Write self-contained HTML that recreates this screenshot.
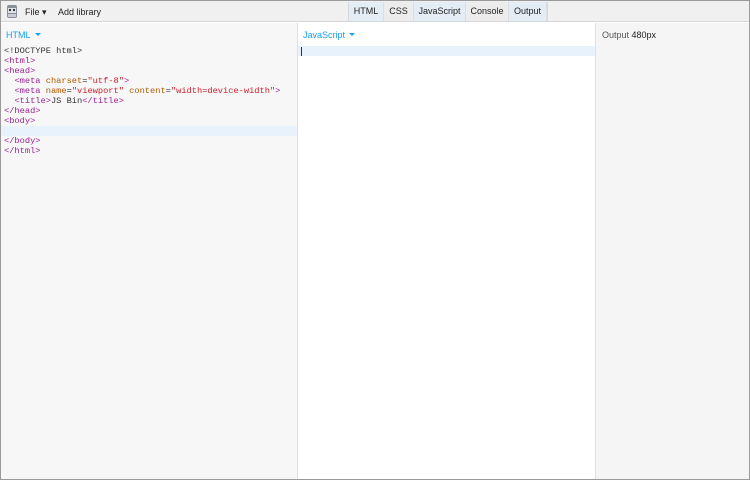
<!DOCTYPE html>
<html><head><style>
*{margin:0;padding:0;box-sizing:border-box}
body{width:750px;height:480px;overflow:hidden;font-family:"Liberation Sans",sans-serif;font-size:9px;background:#fff;position:relative}
.frame{position:absolute;inset:0;border:1px solid #9a9a9a}
.top{position:absolute;left:1px;top:1px;right:1px;height:21px;background:#f0f0f0;border-bottom:1px solid #d6d6d6}
.top span{position:absolute;top:6px;color:#222}
.btns{position:absolute;left:347px;top:1px;height:20px;display:flex;border:1px solid #d8d8d8;border-top:none}
.btns div{height:19px;line-height:19px;text-align:center;color:#222;border-right:1px solid #ddd;background:#ececec}
.btns .on{background:#e4edf6}
.pane{position:absolute;top:23px;bottom:1px}
.p1{left:1px;width:297px;background:#f7f7f7;border-right:1px solid #e0e0e0}
.p2{left:298px;width:298px;background:#fff;border-right:1px solid #e0e0e0}
.p3{left:596px;right:1px;background:#f5f5f5}
.lbl{position:absolute;left:5px;top:7px;color:#1a9ff0}
.lbl:after{content:"";display:inline-block;margin-left:4px;border:3px solid transparent;border-top:3px solid #1a9ff0;vertical-align:-1px}
pre{position:absolute;left:3px;top:23px;font-family:"Liberation Mono",monospace;font-size:8.7px;line-height:10px;color:#333}
.t{color:#9b2393}.a{color:#b05a00}.s{color:#d0202a}
.hl{position:absolute;left:0;right:0;height:10px;background:#e8f2fc}
</style></head><body>
<div class="top">
<svg style="position:absolute;left:5px;top:3px" width="12" height="15" viewBox="0 0 12 15"><rect x="1" y="1" width="10" height="13" rx="2" fill="#8a8e96"/><rect x="2" y="4" width="8" height="5" fill="#dfe3e8"/><rect x="3" y="5" width="2" height="2" fill="#333"/><rect x="7" y="5" width="2" height="2" fill="#333"/><rect x="2" y="10" width="8" height="3" fill="#c8ccd2"/></svg>
<span style="left:24px">File ▾</span>
<span style="left:57px">Add library</span>
<div class="btns"><div class="on" style="width:35px">HTML</div><div style="width:30px">CSS</div><div class="on" style="width:52px">JavaScript</div><div style="width:43px">Console</div><div class="on" style="width:38px">Output</div></div>
</div>
<div class="pane p1">
<div class="lbl">HTML</div>
<div class="hl" style="top:103px"></div>
<pre>&lt;!DOCTYPE html&gt;
<span class="t">&lt;html&gt;</span>
<span class="t">&lt;head&gt;</span>
  <span class="t">&lt;meta</span> <span class="a">charset</span>=<span class="s">"utf-8"</span><span class="t">&gt;</span>
  <span class="t">&lt;meta</span> <span class="a">name</span>=<span class="s">"viewport"</span> <span class="a">content</span>=<span class="s">"width=device-width"</span><span class="t">&gt;</span>
  <span class="t">&lt;title&gt;</span>JS Bin<span class="t">&lt;/title&gt;</span>
<span class="t">&lt;/head&gt;</span>
<span class="t">&lt;body&gt;</span>

<span class="t">&lt;/body&gt;</span>
<span class="t">&lt;/html&gt;</span></pre>
</div>
<div class="pane p2">
<div class="lbl">JavaScript</div>
<div class="hl" style="top:23px"></div>
<div style="position:absolute;left:3px;top:24px;width:1px;height:9px;background:#333"></div>
</div>
<div class="pane p3">
<div style="position:absolute;left:6px;top:7px;color:#222"><span style="color:#555">Output</span> 480px</div>
</div>
<div class="frame"></div>
</body></html>
